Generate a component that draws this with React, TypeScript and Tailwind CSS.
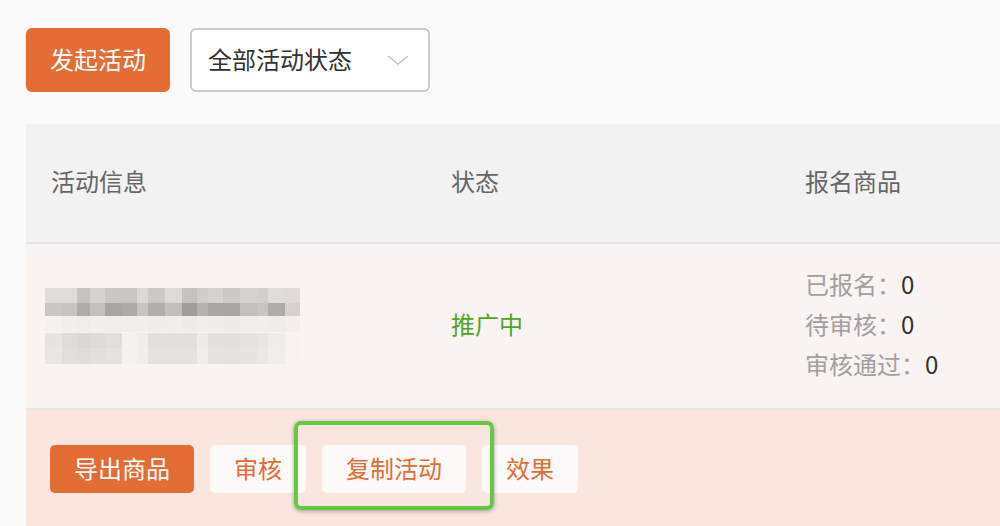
import React from "react";

const xs = [45, 62, 77, 90, 105, 122, 137, 148, 165, 182, 197, 208, 223, 240, 257, 268, 285, 300];
const row0 = ["#e0dcdb", "#e0dcdb", "#c6c2c0", "#d6d2d0", "#cac6c4", "#cac6c4", "#dcd8d6", "#cdc9c7", "#dedad8", "#c6c2c0", "#d0ccca", "#d6d2d0", "#cdc9c7", "#d6d2d0", "#d3cfcd", "#e0dcdb", "#dedad8"];
const row1 = ["#cbc7c5", "#c9c5c3", "#b0acaa", "#c4c0be", "#a9a5a3", "#aeaaa8", "#c8c4c2", "#b2aeac", "#c2bebc", "#a19d9b", "#b5b1af", "#aaa6a4", "#a9a5a3", "#c3bfbd", "#c8c4c2", "#b0acaa", "#d5d1cf"];
const row2 = ["#f5f1ef", "#f3efed", "#f1edeb", "#f3efed", "#f1edeb", "#f1edeb", "#f3efed", "#f0ecea", "#f1edeb", "#efebe9", "#f1edeb", "#f0ecea", "#efebe9", "#f1edeb", "#f2eeec", "#f0ecea", "#f3efed"];
const row3 = ["#e8e4e2", "#e0dcda", "#dcd8d6", "#dedad8", "#e2dedc", "#f5f1ef", "#f1edeb", "#e3dfdd", "#e3dfdd", "#e3dfdd", "#efebe9", "#e4e0de", "#e4e0de", "#e6e2e0", "#eae6e4", "#f0ecea", "#f7f3f1"];
const row4 = ["#eae6e4", "#e2dedc", "#e0dcda", "#e3dfdd", "#e6e2e0", "#f5f1ef", "#f2eeec", "#e6e2e0", "#e6e2e0", "#e6e2e0", "#f1edeb", "#e7e3e1", "#e6e2e0", "#e8e4e2", "#ece8e6", "#f1edeb", "#f7f3f1"];

function Mosaic() {
  const rows: [string[], number, number][] = [
    [row0, 0, 15],
    [row1, 15, 13],
    [row2, 28, 16],
    [row3, 45, 15],
    [row4, 60, 16],
  ];
  return (
    <svg width="256" height="78" viewBox="45 288 256 78">
      {rows.map(([cols, y, h], ri) =>
        cols.map((c, i) => (
          <rect key={`${ri}-${i}`} x={xs[i]} y={288 + y} width={xs[i + 1] - xs[i]} height={h} fill={c} />
        ))
      )}
    </svg>
  );
}

export default function App() {
  return (
    <div
      className="w-[1000px] h-[526px] overflow-hidden bg-[#fafafa] relative"
      style={{ fontFamily: '"Noto Sans CJK SC", "Noto Sans", sans-serif' }}
    >
      <div className="flex items-center gap-5 pl-[26px] pt-[28px]">
        <button className="w-[144px] h-[64px] rounded-[6px] bg-[#e46c35] text-white text-[24px] flex items-center justify-center pb-[2px]">
          发起活动
        </button>
        <div className="w-[240px] h-[64px] rounded-[6px] border-2 border-[#c9cbd3] bg-white flex items-center justify-between pl-[16px] pr-[18px] text-[24px] text-[#333]">
          <span className="pb-[2px]">全部活动状态</span>
          <svg width="24" height="12" viewBox="0 0 24 12">
            <path d="M2 2 L12 10 L22 2" fill="none" stroke="#c4c4c8" strokeWidth="1.5" />
          </svg>
        </div>
      </div>

      <div className="ml-[26px] mt-[32px] w-[1000px]">
        <div className="h-[120px] bg-[#f2f2f2] border-b-2 border-[#e6e6ea] flex items-center pb-[4px] text-[24px] text-[#666]">
          <div className="w-[425px] pl-[25px]">活动信息</div>
          <div className="w-[354px]">状态</div>
          <div>报名商品</div>
        </div>
        <div className="h-[166px] bg-[#f9f3f1] border-b-2 border-[#ebe5e5] flex items-center text-[24px]">
          <div className="w-[425px] pl-[19px] pt-[2px]">
            <Mosaic />
          </div>
          <div className="w-[354px] text-[#52a428] pb-[4px]">推广中</div>
          <div className="flex flex-col gap-[7px] leading-[33px] pb-[5px]">
            <div>
              <span className="text-[#a0a0a0]">已报名：</span>
              <span className="text-[#333]">0</span>
            </div>
            <div>
              <span className="text-[#a0a0a0]">待审核：</span>
              <span className="text-[#333]">0</span>
            </div>
            <div>
              <span className="text-[#a0a0a0]">审核通过：</span>
              <span className="text-[#333]">0</span>
            </div>
          </div>
        </div>
        <div className="h-[120px] bg-[#f8e6df] flex items-start pt-[35px] pl-[24px] gap-[16px] text-[24px]">
          <button className="h-[48px] px-[24px] rounded-[5px] bg-[#e46c35] text-white pb-[2px]">导出商品</button>
          <button className="h-[48px] px-[24px] rounded-[5px] bg-[#fcfaf9] text-[#e46c35] pb-[2px]">审核</button>
          <button className="h-[48px] px-[24px] rounded-[5px] bg-[#fcfaf9] text-[#e46c35] pb-[2px]">复制活动</button>
          <button className="h-[48px] px-[24px] rounded-[5px] bg-[#fcfaf9] text-[#e46c35] pb-[2px]">效果</button>
        </div>
      </div>

      <div className="absolute left-[294px] top-[421px] w-[200px] h-[89px] rounded-[7px] border-4 border-[#66c747] shadow-[0_1px_4px_rgba(0,0,0,0.35)]" />
    </div>
  );
}
